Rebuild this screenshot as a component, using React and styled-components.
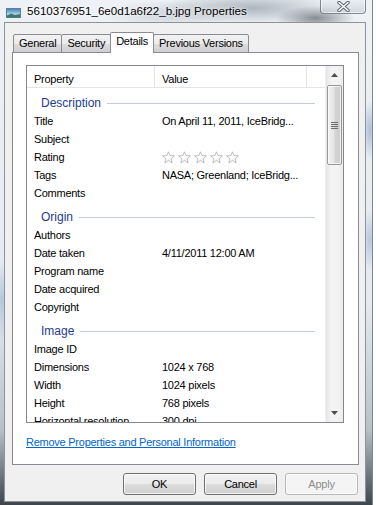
import React from "react";
import styled, { createGlobalStyle } from "styled-components";

const Global = createGlobalStyle`
  html, body { margin: 0; padding: 0; }
  body {
    width: 376px; height: 505px; overflow: hidden;
    font-family: "Liberation Sans", Arial, sans-serif;
  }
  #root { width: 376px; height: 505px; }
`;

const Window = styled.div`
  position: relative;
  height: 505px;
  box-sizing: border-box;
  display: flex;
  flex-direction: column;
  background:
    radial-gradient(ellipse 90px 16px at 250px 8px, rgba(150,160,172,0.75), rgba(150,160,172,0) 100%),
    radial-gradient(ellipse 40px 12px at 315px 18px, rgba(90,96,104,0.7), rgba(90,96,104,0) 100%),
    radial-gradient(ellipse 70px 14px at 170px 14px, rgba(180,186,196,0.6), rgba(180,186,196,0) 100%),
    radial-gradient(ellipse 8px 30px at 370px 130px, rgba(120,150,200,0.55), rgba(120,150,200,0) 100%),
    radial-gradient(ellipse 8px 30px at 370px 240px, rgba(120,150,200,0.45), rgba(120,150,200,0) 100%),
    radial-gradient(ellipse 8px 40px at 2px 300px, rgba(130,160,200,0.5), rgba(130,160,200,0) 100%),
    linear-gradient(to bottom, #eef2f6 0%, #e4eaf0 60%, #b8c0c8 85%, #3e454d 100%);
  border-right: 1px solid #7d858e;
  margin-right: 3px;
  width: 373px;
`;

const TitleBar = styled.div`
  height: 22px;
  display: flex;
  align-items: flex-start;
  padding-left: 6px;
  box-sizing: border-box;
`;

const TitleIcon = styled.svg`
  margin-top: 8px;
  width: 15px;
  height: 10px;
  flex: none;
`;

const TitleText = styled.div`
  margin-left: 6px;
  margin-top: 4px;
  font-size: 11.6px;
  line-height: 14px;
  color: #000;
  text-shadow: 0 0 6px rgba(255,255,255,0.95), 0 0 3px rgba(255,255,255,0.9);
  flex: 1;
  white-space: nowrap;
`;

const CloseButton = styled.div`
  width: 46px;
  height: 15px;
  margin-top: -1px;
  margin-right: 6px;
  box-sizing: border-box;
  border: 1px solid rgba(60,70,80,0.6);
  border-top: none;
  border-radius: 0 0 4px 4px;
  background: linear-gradient(to bottom, rgba(235,238,242,0.7), rgba(200,206,214,0.75));
  box-shadow: inset 0 0 0 1px rgba(255,255,255,0.6);
  display: flex;
  align-items: center;
  justify-content: center;
`;

const Client = styled.div`
  margin: 0 6px 3px 4px;
  flex: 1;
  background: #f0f0f0;
  border: 1px solid #8c939b;
  display: flex;
  flex-direction: column;
  padding: 9px 6px 0 7px;
  box-sizing: border-box;
  letter-spacing: -0.25px;
`;

const TabStrip = styled.div`
  display: flex;
  align-items: flex-end;
  height: 21px;
  margin-bottom: -1px;
  position: relative;
  z-index: 1;
  padding-left: 1px;
`;

const Tab = styled.div`
  box-sizing: border-box;
  height: ${(p) => (p.$selected ? "21px" : "19px")};
  padding: 0 ${(p) => (p.$selected ? "5px" : "5px")};
  margin-left: ${(p) => (p.$first ? "0" : "-1px")};
  border: 1px solid #898c95;
  border-bottom: ${(p) => (p.$selected ? "none" : "1px solid #898c95")};
  border-radius: 2px 2px 0 0;
  background: ${(p) =>
    p.$selected
      ? "#ffffff"
      : "linear-gradient(to bottom, #f2f2f2 0%, #ebebeb 50%, #dddddd 51%, #cfcfcf 100%)"};
  font-size: 11px;
  line-height: ${(p) => (p.$selected ? "17px" : "16px")};
  color: #000;
  white-space: nowrap;
  position: relative;
  z-index: ${(p) => (p.$selected ? 2 : 1)};
`;

const Panel = styled.div`
  height: 413px;
  box-sizing: border-box;
  border: 1px solid #898c95;
  background: #fff;
  padding: 12px 14px 0 13px;
  display: flex;
  flex-direction: column;
`;

const ListView = styled.div`
  height: 358px;
  box-sizing: border-box;
  border: 1px solid #828790;
  display: flex;
  background: #fff;
`;

const ListMain = styled.div`
  flex: 1;
  overflow: hidden;
  display: flex;
  flex-direction: column;
`;

const Header = styled.div`
  height: 22px;
  flex: none;
  display: flex;
  box-sizing: border-box;
  border-bottom: 1px solid #e5e5e5;
  background: #fff;
`;

const HeaderCell = styled.div`
  width: ${(p) => p.$w};
  flex: ${(p) => (p.$w ? "none" : "1")};
  box-sizing: border-box;
  border-right: ${(p) => (p.$w ? "1px solid #e3e3e3" : "none")};
  font-size: 11px;
  color: #000;
  padding: 6px 0 0 7px;
  line-height: 14px;
`;

const GroupRow = styled.div`
  height: 24px;
  flex: none;
  display: flex;
  align-items: center;
  padding: 6px 10px 0 14px;
  box-sizing: border-box;
`;

const GroupLabel = styled.span`
  font-size: 12px;
  line-height: 16px;
  color: #1e3b8f;
  letter-spacing: 0;
`;

const GroupLine = styled.div`
  flex: 1;
  height: 1px;
  background: #c0cbe0;
  margin-left: 6px;
`;

const Row = styled.div`
  height: 18px;
  flex: none;
  display: grid;
  grid-template-columns: 128px 1fr;
  align-items: center;
  font-size: 11px;
  color: #000;
`;

const Cell = styled.div`
  padding-left: 7px;
  white-space: nowrap;
  overflow: hidden;
  line-height: 14px;
  display: flex;
  align-items: center;
`;

const Stars = styled.div`
  display: flex;
  gap: 3px;
`;

const ScrollBar = styled.div`
  width: 17px;
  flex: none;
  display: flex;
  flex-direction: column;
  background: linear-gradient(to right, #e6e6e6, #f3f3f3 30%, #f3f3f3 70%, #ececec);
  border-left: 1px solid #efefef;
`;

const ArrowBox = styled.div`
  height: 18px;
  flex: none;
  display: flex;
  align-items: center;
  justify-content: center;
`;

const Track = styled.div`
  flex: 1;
  padding: 1px 1px 0 1px;
`;

const Thumb = styled.div`
  height: 80px;
  box-sizing: border-box;
  border: 1px solid #979797;
  border-radius: 2px;
  background: linear-gradient(to right, #f1f1f1, #e4e4e4 45%, #d4d4d4 55%, #cdcdcd);
  box-shadow: inset 0 0 0 1px rgba(255,255,255,0.7);
  display: flex;
  align-items: center;
  justify-content: center;
`;

const Link = styled.a`
  margin-top: 11px;
  font-size: 11px;
  line-height: 16px;
  color: #0066cc;
  text-decoration: underline;
  align-self: flex-start;
  cursor: pointer;
`;

const ButtonRow = styled.div`
  display: flex;
  justify-content: flex-end;
  gap: 8px;
  margin-top: 8px;
  margin-right: 1px;
`;

const Button = styled.div`
  width: 73px;
  height: 22px;
  box-sizing: border-box;
  border: 1px solid ${(p) => (p.$disabled ? "#b5b9bc" : "#707070")};
  border-radius: 3px;
  background: ${(p) =>
    p.$disabled
      ? "#f4f4f4"
      : "linear-gradient(to bottom, #f2f2f2 0%, #ebebeb 50%, #dddddd 51%, #cfcfcf 100%)"};
  box-shadow: inset 0 0 0 1px ${(p) => (p.$disabled ? "#fafafa" : "rgba(255,255,255,0.75)")};
  font-size: 11px;
  color: ${(p) => (p.$disabled ? "#8d8d8d" : "#000")};
  display: flex;
  align-items: center;
  justify-content: center;
`;

const Star = () => (
  <svg width="13" height="13" viewBox="0 0 13 13">
    <polygon
      points="6.5,0.8 8.2,4.6 12.3,4.9 9.2,7.6 10.1,11.8 6.5,9.6 2.9,11.8 3.8,7.6 0.7,4.9 4.8,4.6"
      fill="#fbfbfb"
      stroke="#b4b4b4"
      strokeWidth="0.9"
      strokeLinejoin="round"
    />
  </svg>
);

const groups = [
  {
    name: "Description",
    rows: [
      ["Title", "On April 11, 2011, IceBridg..."],
      ["Subject", ""],
      ["Rating", "stars"],
      ["Tags", "NASA; Greenland; IceBridg..."],
      ["Comments", ""],
    ],
  },
  {
    name: "Origin",
    rows: [
      ["Authors", ""],
      ["Date taken", "4/11/2011 12:00 AM"],
      ["Program name", ""],
      ["Date acquired", ""],
      ["Copyright", ""],
    ],
  },
  {
    name: "Image",
    rows: [
      ["Image ID", ""],
      ["Dimensions", "1024 x 768"],
      ["Width", "1024 pixels"],
      ["Height", "768 pixels"],
      ["Horizontal resolution", "300 dpi"],
    ],
  },
];

export default function App() {
  return (
    <>
      <Global />
      <Window>
        <TitleBar>
          <TitleIcon viewBox="0 0 15 10">
            <defs>
              <linearGradient id="sky" x1="0" y1="0" x2="0" y2="1">
                <stop offset="0" stopColor="#3d7fc2" />
                <stop offset="0.55" stopColor="#9cc6e6" />
                <stop offset="0.6" stopColor="#dfeaf0" />
                <stop offset="1" stopColor="#2f6f6a" />
              </linearGradient>
            </defs>
            <rect x="0.5" y="0.5" width="14" height="9" fill="url(#sky)" stroke="#5e7f94" strokeWidth="1" />
            <path d="M1 7.5 L5 5.5 L9 7 L14 6 L14 9.5 L1 9.5 Z" fill="#3b7a66" />
          </TitleIcon>
          <TitleText>5610376951_6e0d1a6f22_b.jpg Properties</TitleText>
          <CloseButton>
            <svg width="13" height="11" viewBox="0 0 13 11">
              <path d="M2 1.5 L11 9.5 M11 1.5 L2 9.5" stroke="#5a6068" strokeWidth="3.4" strokeLinecap="round" />
              <path d="M2 1.5 L11 9.5 M11 1.5 L2 9.5" stroke="#ffffff" strokeWidth="1.6" strokeLinecap="round" />
            </svg>
          </CloseButton>
        </TitleBar>
        <Client>
          <TabStrip>
            <Tab $first>General</Tab>
            <Tab>Security</Tab>
            <Tab $selected>Details</Tab>
            <Tab>Previous Versions</Tab>
          </TabStrip>
          <Panel>
            <ListView>
              <ListMain>
                <Header>
                  <HeaderCell $w="128px">Property</HeaderCell>
                  <HeaderCell $w="152px">Value</HeaderCell>
                  <HeaderCell />
                </Header>
                {groups.map((g) => (
                  <React.Fragment key={g.name}>
                    <GroupRow>
                      <GroupLabel>{g.name}</GroupLabel>
                      <GroupLine />
                    </GroupRow>
                    {g.rows.map(([k, v]) => (
                      <Row key={k}>
                        <Cell>{k}</Cell>
                        <Cell>
                          {v === "stars" ? (
                            <Stars>
                              <Star />
                              <Star />
                              <Star />
                              <Star />
                              <Star />
                            </Stars>
                          ) : (
                            v
                          )}
                        </Cell>
                      </Row>
                    ))}
                  </React.Fragment>
                ))}
              </ListMain>
              <ScrollBar>
                <ArrowBox>
                  <svg width="7" height="4" viewBox="0 0 7 4">
                    <path d="M0 4 L3.5 0 L7 4 Z" fill="#4d4d4d" />
                  </svg>
                </ArrowBox>
                <Track>
                  <Thumb>
                    <svg width="7" height="7" viewBox="0 0 7 7">
                      <path d="M0 0.5 H7 M0 2.5 H7 M0 4.5 H7 M0 6.5 H7" stroke="#6e6e6e" strokeWidth="1" />
                    </svg>
                  </Thumb>
                </Track>
                <ArrowBox>
                  <svg width="7" height="4" viewBox="0 0 7 4">
                    <path d="M0 0 L3.5 4 L7 0 Z" fill="#4d4d4d" />
                  </svg>
                </ArrowBox>
              </ScrollBar>
            </ListView>
            <Link>Remove Properties and Personal Information</Link>
          </Panel>
          <ButtonRow>
            <Button>OK</Button>
            <Button>Cancel</Button>
            <Button $disabled>Apply</Button>
          </ButtonRow>
        </Client>
      </Window>
    </>
  );
}
